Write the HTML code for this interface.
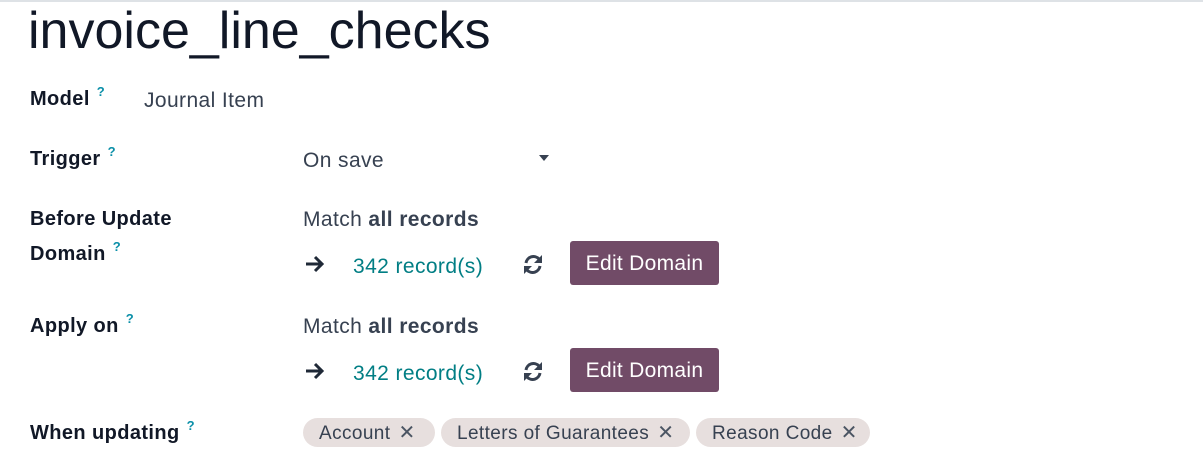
<!DOCTYPE html>
<html><head><meta charset="utf-8"><style>
body{margin:0;width:1203px;height:472px;background:#fff;position:relative;overflow:hidden;font-family:"Liberation Sans",sans-serif;color:#374151}
.a{position:absolute;white-space:nowrap;line-height:1}
.lbl{font-weight:bold;font-size:20px;letter-spacing:0.4px;color:#111827}
.q{color:#0a8fa8;font-size:13px;font-weight:bold;vertical-align:top;margin-left:7px;position:relative;top:-4px}
.v{font-size:21px;letter-spacing:0.4px;color:#374151}
.teal{color:#017e84;font-size:21px;letter-spacing:0.4px}
.btn{position:absolute;background:#714b67;color:#fff;border-radius:3px;font-size:21px;letter-spacing:0.3px;width:149px;height:44px;line-height:46px;text-align:center}
.tag{position:absolute;background:#e7dfde;border-radius:15px;height:29px;line-height:30px;font-size:19px;letter-spacing:0.4px;color:#374151;padding-left:16px;box-sizing:border-box}
.tag b{font-weight:normal;color:#4b5563;margin-left:8px;font-size:20px}
</style></head><body>
<div style="position:absolute;left:0;top:0;width:1203px;height:2px;background:#dee2e6"></div>
<div class="a" style="left:28px;top:5px;font-size:52px;color:#111827">invoice_line_checks</div>
<div class="a lbl" style="left:30px;top:89px">Model<span class="q">?</span></div>
<div class="a v" style="left:144px;top:90px">Journal Item</div>
<div class="a lbl" style="left:30px;top:149px">Trigger<span class="q">?</span></div>
<div class="a v" style="left:303px;top:150px">On save</div>
<div style="position:absolute;left:539px;top:155px;border-left:5px solid transparent;border-right:5px solid transparent;border-top:6px solid #374151"></div>
<div class="a lbl" style="left:30px;top:209px">Before Update</div>
<div class="a lbl" style="left:30px;top:244px">Domain<span class="q">?</span></div>
<div class="a v" style="left:303px;top:209px">Match <b>all records</b></div>
<svg style="position:absolute;left:304px;top:255px" width="21" height="18" viewBox="0 0 21 18"><path d="M2 9H18M11 2L18 9L11 16" fill="none" stroke="#1f2937" stroke-width="3"/></svg>
<div class="a teal" style="left:353px;top:256px">342 record(s)</div>
<svg style="position:absolute;left:522px;top:254px" width="22" height="21" viewBox="0 0 22 21"><path d="M4 9A7.5 7.5 0 0 1 17 5M18 12A7.5 7.5 0 0 1 5 16" fill="none" stroke="#374151" stroke-width="3"/><path d="M20 1V9H12Z M2 20V12H10Z" fill="#374151"/></svg>
<div class="btn" style="left:570px;top:241px">Edit Domain</div>
<div class="a lbl" style="left:30px;top:316px">Apply on<span class="q">?</span></div>
<div class="a v" style="left:303px;top:316px">Match <b>all records</b></div>
<svg style="position:absolute;left:304px;top:362px" width="21" height="18" viewBox="0 0 21 18"><path d="M2 9H18M11 2L18 9L11 16" fill="none" stroke="#1f2937" stroke-width="3"/></svg>
<div class="a teal" style="left:353px;top:363px">342 record(s)</div>
<svg style="position:absolute;left:522px;top:361px" width="22" height="21" viewBox="0 0 22 21"><path d="M4 9A7.5 7.5 0 0 1 17 5M18 12A7.5 7.5 0 0 1 5 16" fill="none" stroke="#374151" stroke-width="3"/><path d="M20 1V9H12Z M2 20V12H10Z" fill="#374151"/></svg>
<div class="btn" style="left:570px;top:348px">Edit Domain</div>
<div class="a lbl" style="left:30px;top:423px">When updating<span class="q">?</span></div>
<div class="tag" style="left:303px;top:418px;width:132px">Account<b>✕</b></div>
<div class="tag" style="left:441px;top:418px;width:249px">Letters of Guarantees<b>✕</b></div>
<div class="tag" style="left:696px;top:418px;width:174px">Reason Code<b>✕</b></div>
</body></html>
